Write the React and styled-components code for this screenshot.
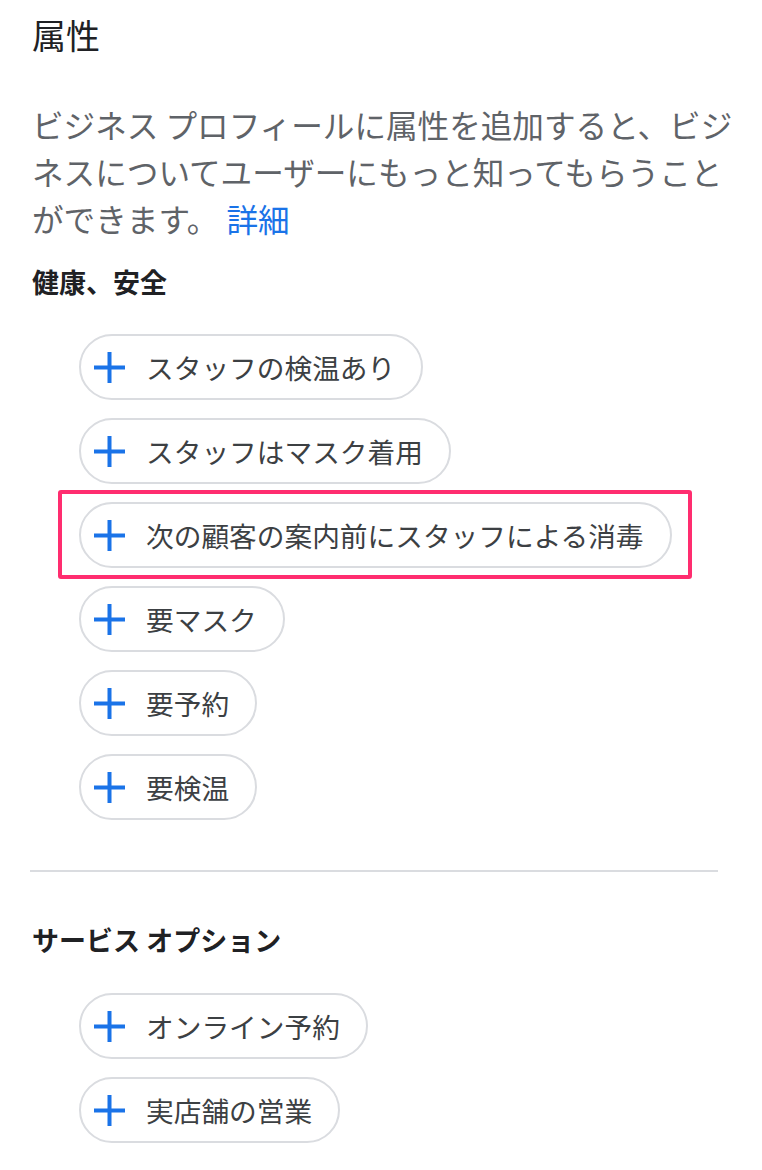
import styled, { createGlobalStyle } from "styled-components";

const GlobalStyle = createGlobalStyle`
  body {
    margin: 0;
    background: #ffffff;
    font-family: "Noto Sans CJK JP", "Noto Sans", sans-serif;
  }
`;

const Page = styled.div`
  width: 762px;
  box-sizing: border-box;
  padding: 15px 44px 27px 32px;
`;

const Title = styled.h1`
  margin: 0;
  font-size: 34px;
  line-height: 40px;
  font-weight: 400;
  color: #202124;
`;

const Description = styled.p`
  margin: 46px -30px 0 0;
  font-size: 31.6px;
  line-height: 47px;
  color: #5f6368;
`;

const Link = styled.a`
  display: inline-block;
  line-height: 47px;
  color: #1a73e8;
  text-decoration: none;
  margin-left: 8px;
`;

const Heading = styled.h2`
  margin: ${(p) => p.$top}px 0 0;
  font-size: 27px;
  line-height: 36px;
  font-weight: 700;
  color: #202124;
`;

const ChipList = styled.div`
  display: flex;
  flex-direction: column;
  align-items: flex-start;
  gap: 18px;
  margin-top: ${(p) => p.$top}px;
  padding-left: 47px;
`;

const Chip = styled.button`
  position: relative;
  display: inline-flex;
  align-items: center;
  gap: 20px;
  height: 66px;
  box-sizing: border-box;
  padding: 0 26px 0 12px;
  border: 2px solid #dadce0;
  border-radius: 33px;
  background: #ffffff;
  font-family: inherit;
  font-size: 27.7px;
  color: #3c4043;
  cursor: pointer;
`;

const Highlight = styled.span`
  position: absolute;
  top: -14px;
  bottom: -13px;
  left: -23px;
  right: -22px;
  border: 4px solid #ff2d6f;
  border-radius: 3px;
  pointer-events: none;
`;

const Divider = styled.hr`
  margin: 50px 0 0 -2px;
  border: none;
  height: 2px;
  background: #dadce0;
`;

const PlusIcon = () => (
  <svg width="33" height="33" viewBox="0 0 33 33">
    <path d="M16.5 1v31M1 16.5h31" stroke="#1a73e8" strokeWidth="4" fill="none" />
  </svg>
);

const health = [
  "スタッフの検温あり",
  "スタッフはマスク着用",
  "次の顧客の案内前にスタッフによる消毒",
  "要マスク",
  "要予約",
  "要検温",
];

const service = ["オンライン予約", "実店舗の営業"];

const App = () => {
  return (
    <Page>
      <GlobalStyle />
      <Title>属性</Title>
      <Description>
        ビジネス プロフィールに属性を追加すると、ビジネスについてユーザーにもっと知ってもらうことができます。<Link href="#">詳細</Link>
      </Description>

      <Heading $top={22}>健康、安全</Heading>
      <ChipList $top={34}>
        {health.map((label, i) => (
          <Chip key={label}>
            <PlusIcon />
            {label}
            {i === 2 && <Highlight />}
          </Chip>
        ))}
      </ChipList>

      <Divider />

      <Heading $top={50}>サービス オプション</Heading>
      <ChipList $top={35}>
        {service.map((label) => (
          <Chip key={label}>
            <PlusIcon />
            {label}
          </Chip>
        ))}
      </ChipList>
    </Page>
  );
};

export default App;
